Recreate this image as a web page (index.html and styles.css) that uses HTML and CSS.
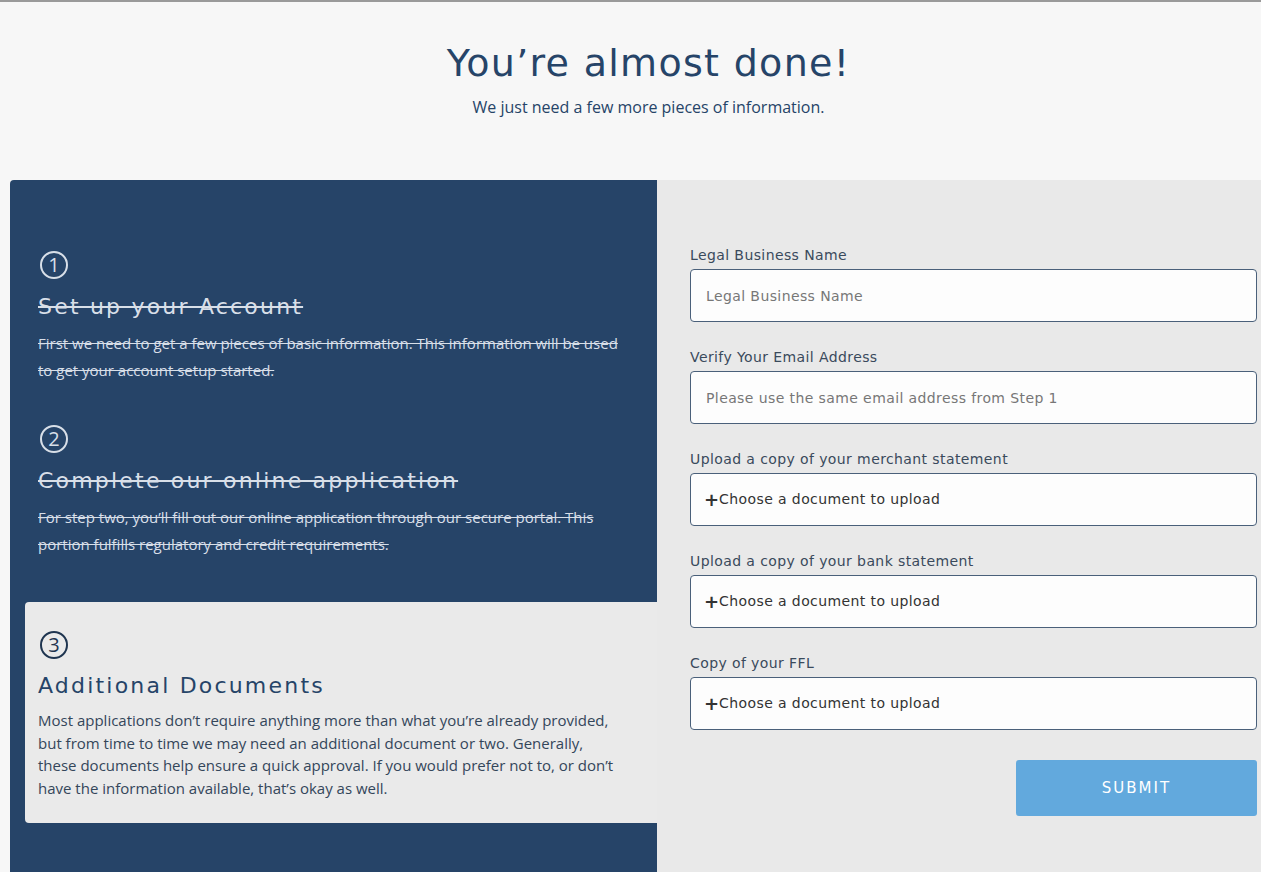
FILE: index.html
```html
<!DOCTYPE html>
<html lang="en">
<head>
  <meta charset="UTF-8" />
  <meta name="viewport" content="width=device-width, initial-scale=1.0"/>
  <title>You're almost done!</title>
  <link rel="stylesheet" href="styles.css">
</head>
<body>
  <header class="intro">
    <h1>You’re almost done!</h1>
    <p>We just need a few more pieces of information.</p>
  </header>

  <main class="wrap">
    <section class="steps">
      <div class="step done">
        <span class="num">1</span>
        <h2>Set up your Account</h2>
        <p>First we need to get a few pieces of basic information. This information will be used to get your account setup started.</p>
      </div>

      <div class="step done">
        <span class="num">2</span>
        <h2>Complete our online application</h2>
        <p>For step two, you’ll fill out our online application through our secure portal. This portion fulfills regulatory and credit requirements.</p>
      </div>

      <div class="step current">
        <span class="num">3</span>
        <h2>Additional Documents</h2>
        <p>Most applications don’t require anything more than what you’re already provided, but from time to time we may need an additional document or two. Generally, these documents help ensure a quick approval. If you would prefer not to, or don’t have the information available, that’s okay as well.</p>
      </div>
    </section>

    <section class="panel">
      <form id="docs-form">
        <label class="field">Legal Business Name
          <input type="text" name="business_name" placeholder="Legal Business Name" />
        </label>

        <label class="field">Verify Your Email Address
          <input type="email" name="email" placeholder="Please use the same email address from Step 1" />
        </label>

        <label class="field">Upload a copy of your merchant statement
          <span class="upload"><b>+</b>Choose a document to upload</span>
        </label>

        <label class="field">Upload a copy of your bank statement
          <span class="upload"><b>+</b>Choose a document to upload</span>
        </label>

        <label class="field">Copy of your FFL
          <span class="upload"><b>+</b>Choose a document to upload</span>
        </label>

        <div class="actions">
          <button type="submit">SUBMIT</button>
        </div>
      </form>
    </section>
  </main>
</body>
</html>
```

FILE: styles.css
```css
body {
  margin: 0;
  background: #f7f7f7;
  border-top: 2px solid #9a9a9a;
  font-family: "Open Sans", sans-serif;
  color: #264468;
}
.intro {
  text-align: center;
  padding: 38px 0 0 36px;
  height: 140px;
  box-sizing: border-box;
}
.intro h1 {
  margin: 0;
  font-family: "DejaVu Sans", sans-serif;
  font-weight: normal;
  font-size: 38px;
  letter-spacing: 1.3px;
  line-height: 46px;
  color: #264468;
}
.intro p {
  margin: 10px 0 0;
  font-size: 16px;
  color: #264468;
}
.wrap {
  display: flex;
  margin-left: 10px;
  margin-top: 38px;
  height: 700px;
}
.steps {
  width: 647px;
  background: #264468;
  border-top-left-radius: 4px;
  padding-top: 71px;
  box-sizing: border-box;
}
.step {
  padding: 0 30px 0 28px;
  height: 174px;
  box-sizing: border-box;
}
.num {
  display: flex;
  align-items: center;
  justify-content: center;
  width: 24px;
  height: 24px;
  margin-left: 2px;
  border: 2px solid currentColor;
  border-radius: 50%;
  font-size: 20px;
  line-height: 1;
}
.step h2 {
  margin: 13px 0 8px;
  font-family: "DejaVu Sans", sans-serif;
  font-weight: normal;
  font-size: 22px;
  letter-spacing: 2.2px;
  line-height: 30px;
}
.step p {
  margin: 0;
  font-size: 15px;
  line-height: 27px;
}
.done {
  color: #d8dfe8;
}
.done h2, .done p {
  text-decoration: line-through;
}
.current {
  margin: 3px 0 0 15px;
  padding: 29px 39px 24px 13px;
  height: auto;
  background: #eaeaea;
  border-radius: 4px 0 0 4px;
  color: #264468;
}
.current h2 {
  margin-top: 12px;
}
.current p {
  color: #34465a;
  line-height: 22.5px;
}
.current .num {
  color: #1f3550;
}
.panel {
  flex: 1;
  background: #e9e9e9;
  padding: 67px 4px 0 33px;
}
.field {
  display: block;
  font-family: "DejaVu Sans", sans-serif;
  font-size: 14px;
  letter-spacing: 0.4px;
  line-height: 17px;
  color: #3a4a5c;
  margin-bottom: 27px;
}
.field input, .upload {
  display: flex;
  align-items: center;
  width: 100%;
  height: 53px;
  margin-top: 5px;
  padding: 0 15px;
  box-sizing: border-box;
  border: 1px solid #4a607a;
  border-radius: 4px;
  background: #fdfdfd;
  font-family: "DejaVu Sans", sans-serif;
  font-size: 14px;
  letter-spacing: 0.4px;
  color: #333;
}
.field input::placeholder {
  color: #777;
}
.upload b {
  font-size: 18px;
  letter-spacing: 0;
  margin-left: -2px;
}
.actions {
  display: flex;
  justify-content: flex-end;
  margin-top: 30px;
}
button {
  width: 241px;
  height: 56px;
  border: none;
  border-radius: 3px;
  background-color: #62a9dd;
  color: white;
  font-family: "DejaVu Sans", sans-serif;
  font-size: 15px;
  letter-spacing: 2px;
  cursor: pointer;
}
```
